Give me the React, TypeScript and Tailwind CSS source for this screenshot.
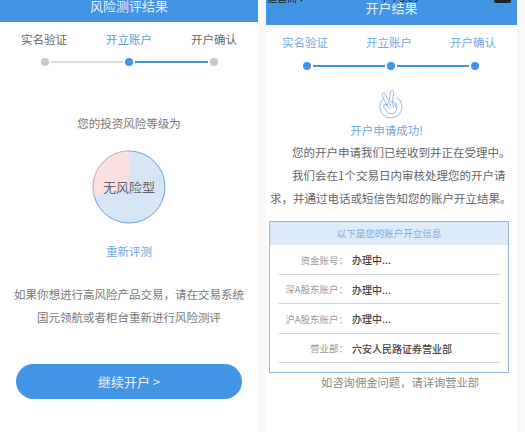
const FONT = "font-['Noto_Sans_CJK_SC','Liberation_Sans',sans-serif]";

type StepsProps = {
  labels: string[];
  labelColors: string[];
  dots: string[];
  lines: string[];
  inset: string;
  gapClass: string;
  lineWidth: string;
};

function Steps({ labels, labelColors, dots, lines, inset, gapClass, lineWidth }: StepsProps) {
  return (
    <div>
      <div className={`flex justify-between ${inset}`}>
        {labels.map((label, i) => (
          <span key={label} className={`text-[11.5px] leading-[16px] ${labelColors[i]}`}>
            {label}
          </span>
        ))}
      </div>
      <div className={`flex items-center justify-center ${gapClass}`}>
        <span className={`h-2 w-2 rounded-full ${dots[0]}`} />
        <span className={`mx-[2px] h-[2px] ${lineWidth} ${lines[0]}`} />
        <span className={`h-2 w-2 rounded-full ${dots[1]}`} />
        <span className={`mx-[2px] h-[2px] ${lineWidth} ${lines[1]}`} />
        <span className={`h-2 w-2 rounded-full ${dots[2]}`} />
      </div>
    </div>
  );
}

function RiskPie() {
  return (
    <div className="relative mx-auto h-[74px] w-[74px]">
      <svg viewBox="0 0 74 74" className="h-full w-full">
        <circle cx="37" cy="37" r="36" fill="#d6e6f7" stroke="#6ba3dc" strokeWidth="1" />
        <path d="M37 37 L37 1 A36 36 0 0 0 2.4 46.5 Z" fill="#f9e1e2" />
        <path d="M37 1 A36 36 0 0 0 2.4 46.5" fill="none" stroke="#e8b0b2" strokeWidth="1" />
      </svg>
      <span className="absolute inset-0 flex items-center justify-center text-[13px] text-[#666]">无风险型</span>
    </div>
  );
}

function HandIcon() {
  return (
    <svg viewBox="0 0 28 32" className="mx-auto h-[30px] w-[26px]" fill="none" stroke="#7fb0e2" strokeWidth="0.9">
      <path d="M7.5 9.5 A12 12 0 1 0 21 8.5" />
      <path d="M11 18 L5.5 6.5 Q5 4.6 6.6 4.2 Q8 4 8.8 5.6 L13 13" />
      <path d="M13 13 L14.6 2.8 Q15.2 1 16.8 1.4 Q18.2 2 18 3.8 L16.6 14" />
      <path d="M11 18 Q9 16 7.6 17 Q6.6 18 7.6 19.6 L10.6 24.4 Q12.6 27 16 26.6 Q20.6 26 21.2 21.6 L21 16.4 Q20.6 15 19.4 15.4 Q18.4 13.4 16.6 14 Q14.6 12.8 13 14 Q11.4 14.6 11 18 Z" />
      <path d="M14 15 L15 20 M16.8 14.4 L17.8 19.6 M19.4 15.4 L20 19.4 M11 18 L13.4 21.6" />
    </svg>
  );
}

const accountRows = [
  { label: "资金账号：", value: "办理中..." },
  { label: "深A股东账户：", value: "办理中..." },
  { label: "沪A股东账户：", value: "办理中..." },
  { label: "营业部：", value: "六安人民路证券营业部" },
];

export default function App() {
  return (
    <div className={`flex h-[432px] w-[525px] items-stretch overflow-hidden bg-[#f8f8f8] ${FONT}`}>
      {/* 左侧：风险测评结果 */}
      <div className="flex w-[258px] flex-col bg-white">
        <div className="flex h-[22px] items-end justify-center overflow-hidden bg-[#4294e5] pb-[8px] text-[13px] leading-[17px] text-[#e6f1fc]">
          风险测评结果
        </div>
        <div className="pt-[9px]">
          <Steps
            labels={["实名验证", "开立账户", "开户确认"]}
            labelColors={["text-[#666]", "text-[#5a9fe0]", "text-[#666]"]}
            dots={["bg-[#c8c8c8]", "bg-[#4294e5]", "bg-[#c8c8c8]"]}
            lines={["bg-[#dcdcdc]", "bg-[#4294e5]"]}
            inset="px-[21px]"
            gapClass="mt-[11px]"
            lineWidth="w-[72.5px]"
          />
        </div>
        <p className="mt-[49px] text-center text-[11.5px] leading-[16px] text-[#777]">您的投资风险等级为</p>
        <div className="mt-[19px]">
          <RiskPie />
        </div>
        <p className="mt-[19px] text-center text-[11.5px] leading-[16px] text-[#6fa5dc]">重新评测</p>
        <div className="mt-[24px] text-center text-[11.5px] leading-[23px] text-[#777]">
          <p>如果你想进行高风险产品交易，请在交易系统</p>
          <p>国元领航或者柜台重新进行风险测评</p>
        </div>
        <div className="mt-[35px] flex h-[35px] w-[226px] items-center justify-center self-center rounded-full bg-[#4294e5] text-[13px] text-[#e6f1fc]">
          继续开户 &gt;
        </div>
      </div>

      {/* 右侧：开户结果 */}
      <div className="ml-[8px] flex w-[251px] flex-col bg-white">
        <div className="relative flex h-[25px] items-end justify-center overflow-hidden bg-[#4294e5] pb-[9px] text-[13px] leading-[17px] text-[#e6f1fc]">
          开户结果
          <div className="absolute inset-x-0 -top-[9px] flex items-center justify-between pl-[1px] pr-[6px] text-[10px] leading-[13px] text-[#222]">
            <span>运营商 ▾</span>
            <span>下午5:09</span>
            <span className="h-[11px] w-[17px] rounded-[2px] bg-[#222]" />
          </div>
        </div>
        <div className="pt-[9px]">
          <Steps
            labels={["实名验证", "开立账户", "开户确认"]}
            labelColors={["text-[#6fa9e2]", "text-[#6fa9e2]", "text-[#6fa9e2]"]}
            dots={["bg-[#4294e5]", "bg-[#4294e5]", "bg-[#4294e5]"]}
            lines={["bg-[#4294e5]", "bg-[#4294e5]"]}
            inset="pl-[16px] pr-[21px]"
            gapClass="mt-[12px] pr-[1px]"
            lineWidth="w-[72px]"
          />
        </div>
        <div className="mb-[4px] mt-[19px] pr-[3px]">
          <HandIcon />
        </div>
        <p className="pr-[10px] text-center text-[11.5px] leading-[14px] text-[#6fa5dc]">开户申请成功!</p>
        <div className="mt-[4px] pl-[4px] text-[11.5px] leading-[23px] text-[#666]">
          <p className="whitespace-nowrap pl-[22px]">您的开户申请我们已经收到并正在受理中。</p>
          <p className="whitespace-nowrap pl-[22px]">我们会在1个交易日内审核处理您的开户请</p>
          <p className="whitespace-nowrap">求，并通过电话或短信告知您的账户开立结果。</p>
        </div>
        <div className="ml-[3px] mt-[11px] w-[240px] border border-[#8db8e3] bg-white">
          <div className="flex h-[23px] items-center justify-center bg-[#dceafa] text-[9.5px] text-[#7aaee4]">
            以下是您的账户开立信息
          </div>
          <div className="px-[8px]">
            {accountRows.map((row) => (
              <div key={row.label} className="flex h-[29.5px] items-center border-b border-[#d6d6d6] pt-[1px]">
                <span className="w-[70px] whitespace-nowrap text-right text-[9.5px] text-[#999]">{row.label}</span>
                <span className="ml-[4px] text-[10px] font-medium text-[#444]">{row.value}</span>
              </div>
            ))}
            <div className="h-[9px]" />
          </div>
        </div>
        <p className="mt-[1px] pl-[55px] text-[11.3px] leading-[16px] text-[#888]">如咨询佣金问题，请详询营业部</p>
      </div>
    </div>
  );
}
